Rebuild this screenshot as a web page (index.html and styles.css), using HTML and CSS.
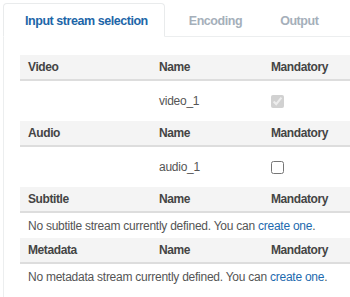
FILE: index.html
```html
<!DOCTYPE html>
<html>
<head>
<meta charset="utf-8">
<link rel="stylesheet" href="styles.css">
</head>
<body>
<div class="wrap">
  <ul class="nav">
    <li class="tab active">Input stream selection</li>
    <li class="tab">Encoding</li>
    <li class="tab">Output</li>
    <li class="fill"></li>
  </ul>
  <div class="panel">
    <table class="streams">
      <colgroup><col class="c1"><col class="c2"><col class="c3"></colgroup>
      <thead><tr><th>Video</th><th>Name</th><th>Mandatory</th></tr></thead>
      <tbody><tr class="data"><td></td><td>video_1</td><td><input type="checkbox" checked disabled></td></tr></tbody>
    </table>
    <table class="streams">
      <colgroup><col class="c1"><col class="c2"><col class="c3"></colgroup>
      <thead><tr><th>Audio</th><th>Name</th><th>Mandatory</th></tr></thead>
      <tbody><tr class="data"><td></td><td>audio_1</td><td><input type="checkbox"></td></tr></tbody>
    </table>
    <table class="streams">
      <colgroup><col class="c1"><col class="c2"><col class="c3"></colgroup>
      <thead><tr><th>Subtitle</th><th>Name</th><th>Mandatory</th></tr></thead>
      <tbody><tr class="msg"><td colspan="3">No subtitle stream currently defined. You can <a href="#">create one</a>.</td></tr></tbody>
    </table>
    <table class="streams">
      <colgroup><col class="c1"><col class="c2"><col class="c3"></colgroup>
      <thead><tr><th>Metadata</th><th>Name</th><th>Mandatory</th></tr></thead>
      <tbody><tr class="msg"><td colspan="3">No metadata stream currently defined. You can <a href="#">create one</a>.</td></tr></tbody>
    </table>
  </div>
</div>
</body>
</html>
```
FILE: styles.css
```css
html, body {
  margin: 0;
  padding: 0;
  background: #fff;
  font-family: "Liberation Sans", Arial, sans-serif;
  font-size: 12px;
  letter-spacing: -0.25px;
  color: #555;
  overflow: hidden;
}
.wrap {
  padding: 3px 0 0 3px;
  width: 500px;
}
.nav {
  list-style: none;
  margin: 0;
  padding: 0;
  display: flex;
  align-items: flex-end;
}
.tab {
  height: 34px;
  box-sizing: border-box;
  display: flex;
  align-items: center;
  padding: 2px 14px 0 24px;
  font-size: 12.5px;
  letter-spacing: -0.45px;
  font-weight: bold;
  color: #a5afba;
  border-bottom: 1px solid #eceeef;
}
.tab.active {
  color: #1d66a8;
  border: 1px solid #e9ebec;
  border-bottom: 1px solid transparent;
  border-radius: 4px 4px 0 0;
  padding: 2px 16px 0 21px;
}
.fill {
  flex: 1;
  height: 34px;
  box-sizing: border-box;
  border-bottom: 1px solid #eceeef;
}
.panel {
  border-left: 1px solid #eceeef;
  padding: 18px 16px 20px 16px;
}
.streams {
  border-collapse: collapse;
  table-layout: fixed;
  width: 420px;
}
.c1 { width: 131px; }
.c2 { width: 112px; }
.c3 { width: 177px; }
.streams th {
  background: #f4f4f4;
  color: #444;
  font-weight: bold;
  letter-spacing: -0.4px;
  text-align: left;
  height: 24px;
  padding: 0 8px;
  border-bottom: 2px solid #dddddd;
}
.streams td {
  padding: 0 8px;
  text-align: left;
}
.data td { height: 40px; }
.msg td { height: 25px; }
.streams input {
  margin: 0;
  width: 13px;
  height: 13px;
  vertical-align: middle;
}
a {
  color: #1d6aae;
  text-decoration: none;
}
```
